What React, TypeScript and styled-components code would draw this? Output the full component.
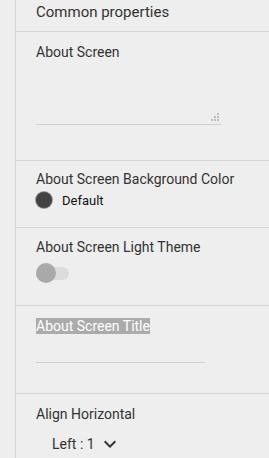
import styled, { createGlobalStyle } from "styled-components";

const GlobalStyle = createGlobalStyle`
  html, body {
    margin: 0;
    padding: 0;
    background: #eeeeee;
  }
  body {
    font-family: Roboto, "Liberation Sans", sans-serif;
    color: #333333;
  }
`;

function App() {
  return (
    <>
      <GlobalStyle />
      <Layout>
        <Gutter />
        <Panel>
          <Header>Common properties</Header>
          <Section pad={12} height={129}>
            <Label>About Screen</Label>
            <TextArea>
              <Grip viewBox="0 0 8 8">
                <rect x="6" y="0" width="2" height="2" />
                <rect x="3" y="3" width="2" height="2" />
                <rect x="6" y="3" width="2" height="2" />
                <rect x="0" y="6" width="2" height="2" />
                <rect x="3" y="6" width="2" height="2" />
                <rect x="6" y="6" width="2" height="2" />
              </Grip>
            </TextArea>
          </Section>
          <Section pad={10} height={67}>
            <Label>About Screen Background Color</Label>
            <ColorRow>
              <Swatch colour="#424242" />
              <ColorName>Default</ColorName>
            </ColorRow>
          </Section>
          <Section pad={11} height={78}>
            <Label>About Screen Light Theme</Label>
            <Switch>
              <Track />
              <Thumb />
            </Switch>
          </Section>
          <Section pad={12} height={88}>
            <Label>
              <Selected>About Screen Title</Selected>
            </Label>
            <TextInput />
          </Section>
          <Section pad={12} height={80}>
            <Label>Align Horizontal</Label>
            <Select>
              <span>Left : 1</span>
              <svg width="24" height="24" viewBox="0 0 24 24" fill="#333333">
                <path d="M16.59 8.59L12 13.17 7.41 8.59 6 10l6 6 6-6z" />
              </svg>
            </Select>
          </Section>
        </Panel>
      </Layout>
    </>
  );
}

const Layout = styled.div`
  display: flex;
  height: 458px;
  overflow: hidden;
`;
const Gutter = styled.div`
  width: 15px;
  flex-shrink: 0;
  border-right: 1px solid #d6d6d6;
`;
const Panel = styled.div`
  flex: 1;
  display: flex;
  flex-direction: column;
`;
const Header = styled.div`
  height: 32px;
  flex-shrink: 0;
  box-sizing: border-box;
  padding: 3px 20px 0;
  font-size: 15px;
  line-height: 18px;
  border-bottom: 1px solid #d6d6d6;
`;
const Section = styled.div<{ pad: number; height: number }>`
  box-sizing: border-box;
  height: ${({ height }) => height}px;
  flex-shrink: 0;
  padding: ${({ pad }) => pad}px 20px 0;
  border-bottom: 1px solid #d6d6d6;
  display: flex;
  flex-direction: column;
  align-items: flex-start;
`;
const Label = styled.div`
  font-size: 14px;
  line-height: 16px;
  color: #333333;
`;
const Selected = styled.span`
  background: #ababab;
  color: #ffffff;
`;
const TextArea = styled.div`
  position: relative;
  width: 186px;
  height: 60px;
  margin-top: 4px;
  border-bottom: 1px solid #d0d0d0;
`;
const Grip = styled.svg`
  position: absolute;
  right: 3px;
  bottom: 3px;
  width: 8px;
  height: 8px;
  fill: #bdbdbd;
`;
const ColorRow = styled.div`
  display: flex;
  align-items: center;
  gap: 10px;
  margin-top: 5px;
`;
const Swatch = styled.div<{ colour: string }>`
  width: 16px;
  height: 16px;
  border-radius: 50%;
  background: ${({ colour }) => colour};
  box-shadow: 0 0 0 1px #9a9a9a;
`;
const ColorName = styled.span`
  font-size: 13px;
  color: #111111;
`;
const Switch = styled.div`
  position: relative;
  width: 34px;
  height: 20px;
  margin-top: 8px;
`;
const Track = styled.div`
  position: absolute;
  left: 0;
  top: 4px;
  width: 33px;
  height: 13px;
  border-radius: 7px;
  background: #dcdcdc;
`;
const Thumb = styled.div`
  position: absolute;
  left: 0;
  top: 0;
  width: 20px;
  height: 20px;
  border-radius: 50%;
  background: #a9a9a9;
`;
const TextInput = styled.div`
  width: 169px;
  height: 28px;
  border-bottom: 1px solid #d0d0d0;
`;
const Select = styled.div`
  display: flex;
  align-items: center;
  gap: 3px;
  margin: 10px 0 0 16px;
  font-size: 14px;
  color: #333333;
`;

export default App;
